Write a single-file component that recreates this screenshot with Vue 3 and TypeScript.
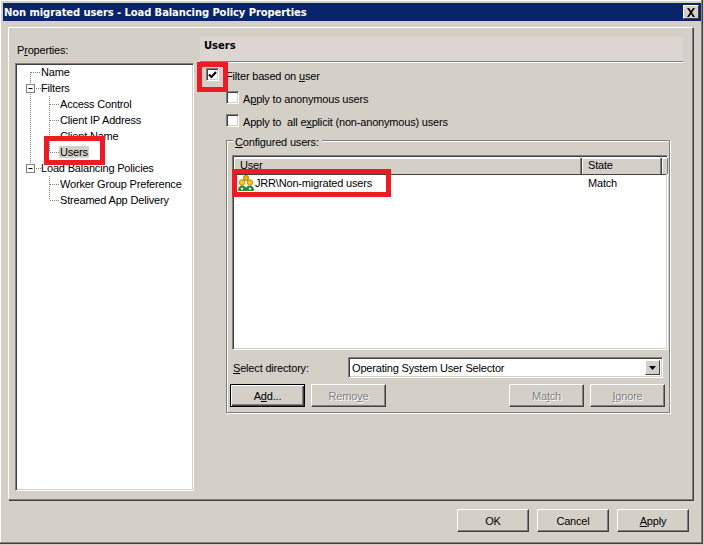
<script setup lang="ts">
const rows = [
  { label: 'Name', indent: 'l1' },
  { label: 'Filters', indent: 'l1' },
  { label: 'Access Control', indent: 'l2' },
  { label: 'Client IP Address', indent: 'l2' },
  { label: 'Client Name', indent: 'l2' },
  { label: 'Users', indent: 'l2 sel' },
  { label: 'Load Balancing Policies', indent: 'l1' },
  { label: 'Worker Group Preference', indent: 'l2' },
  { label: 'Streamed App Delivery', indent: 'l2' },
]
</script>

<template>
  <div class="window">
    <div class="titlebar">
      <span class="title">Non migrated users - Load Balancing Policy Properties</span>
      <span class="close">
        <svg width="10" height="9" viewBox="0 0 10 9"><path d="M1 0h2l2 3 2-3h2L6 4.500 9 9H7L5 6 3 9H1l3-4.500z" fill="#000"/></svg>
      </span>
    </div>

    <div class="panel">
      <div class="left">
        <div class="props-label">P<u>r</u>operties:</div>
        <div class="tree sunken">
          <svg class="tree-lines" width="120" height="150" viewBox="0 0 120 150">
            <g stroke="#808080" stroke-dasharray="1 1" fill="none">
              <path d="M12.500 9V105" />
              <path d="M13 9.500H23M18 25.500H23M18 105.500H23" />
              <path d="M31.500 33V89M31.500 113V137" />
              <path d="M32 41.500H42M32 57.500H42M32 73.500H42M32 89.500H42M32 121.500H42M32 137.500H42" />
            </g>
            <g fill="#fff" stroke="#808080">
              <rect x="8.500" y="21.500" width="8" height="8" />
              <rect x="8.500" y="101.500" width="8" height="8" />
            </g>
            <path d="M10.500 25.500h4M10.500 105.500h4" stroke="#000" />
          </svg>
          <div v-for="r in rows" :key="r.label" class="row" :class="r.indent"><span>{{ r.label }}</span></div>
        </div>
      </div>

      <div class="right">
        <div class="band"><b>Users</b></div>
        <div class="opts">
          <label class="check first"><span class="box sunken"><svg width="9" height="8" viewBox="0 0 9 8"><path d="M1 3.500l2.500 2.500L8 1" fill="none" stroke="#000" stroke-width="2"/></svg></span><span class="lbl">Filter based on <u>u</u>ser</span></label>
          <label class="check sub"><span class="box sunken"></span><span class="lbl">A<u>p</u>ply to anonymous users</span></label>
          <label class="check sub"><span class="box sunken"></span><span class="lbl">Apply to &nbsp;all e<u>x</u>plicit (non-anonymous) users</span></label>
        </div>

        <div class="group">
          <div class="legend"><u>C</u>onfigured users:</div>
          <div class="list sunken">
            <div class="list-head">
              <div class="col user">User</div>
              <div class="col state">State</div>
              <div class="col tail"></div>
            </div>
            <div class="list-row">
              <div class="cell user-cell">
                <svg class="group-icon" width="16" height="16" viewBox="0 0 16 16">
                  <path d="M0.500 15.500c0-3 1-4.500 3.500-4.500 2 0 3 1 4 2 1-1 2-2 4-2 2.500 0 3.500 1.500 3.500 4.500z" fill="#1f8f2a" stroke="#0b6b12" stroke-width=".7"/>
                  <path d="M4 12.500v2.500M2.800 13.800h2.400M12 12.500v2.500M10.800 13.800h2.400" stroke="#fff" stroke-width="1"/>
                  <circle cx="8" cy="3" r="2.700" fill="#e5ae08" stroke="#a37400" stroke-width=".7"/>
                  <circle cx="4" cy="7.500" r="2.800" fill="#f2c81a" stroke="#a37400" stroke-width=".7"/>
                  <circle cx="12" cy="7.500" r="2.800" fill="#f2c81a" stroke="#a37400" stroke-width=".7"/>
                </svg>
                <span>JRR\Non-migrated users</span>
              </div>
              <div class="cell state-cell">Match</div>
            </div>
          </div>

          <div class="dir-row">
            <div class="dir-label"><u>S</u>elect directory:</div>
            <div class="select sunken">
              <span class="select-text">Operating System User Selector</span>
              <span class="arrow"><svg width="7" height="4" viewBox="0 0 7 4"><path d="M0 0h7L3.500 4z" fill="#000"/></svg></span>
            </div>
          </div>

          <div class="btn-row">
            <button class="btn default">A<u>d</u>d...</button>
            <button class="btn dis">Remo<u>v</u>e</button>
            <span class="spacer"></span>
            <button class="btn dis">Ma<u>t</u>ch</button>
            <button class="btn dis"><u>I</u>gnore</button>
          </div>
        </div>
      </div>
    </div>

    <div class="footer">
      <button class="btn foot">OK</button>
      <button class="btn foot">Cancel</button>
      <button class="btn foot"><u>A</u>pply</button>
    </div>

    <div class="mark m1"></div>
    <div class="mark m2"></div>
    <div class="mark m3"></div>
  </div>
</template>

<style>
html, body { margin: 0; padding: 0; background: #d4d0c8; }
</style>

<style scoped>
.window {
  position: relative;
  box-sizing: border-box;
  width: 704px;
  height: 545px;
  padding: 3px 3px 0;
  overflow: hidden;
  background: #d4d0c8;
  box-shadow: inset -1px -1px 0 #d4d0c8, inset -2px -2px 0 #404040, inset -3px -3px 0 #808080, inset 1px 1px 0 #fff;
  font-family: "Liberation Sans", Arial, sans-serif;
  font-size: 11px;
  letter-spacing: -0.18px;
  color: #000;
}
.titlebar {
  height: 18px;
  background: #0a246a;
  display: flex;
  align-items: center;
  justify-content: space-between;
  padding: 0 2px 0 1px;
  color: #fff;
}
.title { font-family: "DejaVu Sans", sans-serif; font-weight: 700; font-size: 10px; letter-spacing: -0.1px; }
.close {
  width: 16px;
  height: 14px;
  box-sizing: border-box;
  background: #d4d0c8;
  border: 1px solid;
  border-color: #fff #404040 #404040 #fff;
  display: flex;
  align-items: center;
  justify-content: center;
}
.panel {
  box-sizing: border-box;
  margin: 6px 8px 0 5px;
  height: 473px;
  border: 1px solid;
  border-color: #fff #808080 #808080 #fff;
  box-shadow: 1px 1px 0 #404040;
  display: flex;
  padding: 9px 9px 8px 6px;
  gap: 6px;
}
.sunken {
  border: 1px solid;
  border-color: #808080 #fff #fff #808080;
  box-shadow: inset 1px 1px 0 #404040, inset -1px -1px 0 #d4d0c8;
}
.left { width: 179px; display: flex; flex-direction: column; flex: none; }
.props-label { height: 25px; box-sizing: border-box; padding: 6px 0 0 2px; line-height: 14px; margin-bottom: 1px; }
.tree {
  position: relative;
  flex: 1;
  background: #fff;
  padding: 1px 0 0;
  box-sizing: border-box;
}
.tree-lines { position: absolute; left: 2px; top: -1px; }
.row { height: 16px; line-height: 15px; position: relative; white-space: nowrap; }
.row.l1 { padding-left: 25px; }
.row.l2 { padding-left: 44px; }
.row.sel span { background: #d4d0c8; padding: 0 1px; margin-left: -1px; }
.right { flex: 1; min-width: 0; display: flex; flex-direction: column; }
.band {
  height: 25px;
  flex: none;
  box-sizing: border-box;
  background-color: #dcd5d0;
  background-image: repeating-conic-gradient(#dbd3cf 0 25%, #ded7d3 0 50%);
  background-size: 2px 2px;
  padding: 1px 0 0 4px;
  line-height: 14px;
  border-bottom: 1px solid #808080;
  box-shadow: 0 1px 0 #fff;
}
.band b { font-family: "DejaVu Sans", sans-serif; font-size: 10px; letter-spacing: 0; }
.opts { padding: 6px 0 0 6px; display: flex; flex-direction: column; gap: 10px; }
.check { display: flex; align-items: center; gap: 4px; height: 13px; white-space: nowrap; }
.check.first { gap: 7px; }
.check.sub { margin-left: 20px; gap: 4px; }
.lbl { margin-top: 2px; }
.box {
  width: 13px;
  height: 13px;
  box-sizing: border-box;
  background: #fff;
  display: flex;
  align-items: center;
  justify-content: center;
  flex: none;
}
.group {
  position: relative;
  box-sizing: border-box;
  margin: 13px 13px 0 26px;
  height: 273px;
  border: 1px solid #808080;
  box-shadow: inset 1px 1px 0 #fff, 1px 1px 0 #fff;
  padding: 14px 1px 0 3px;
}
.legend {
  position: absolute;
  top: -6px;
  left: 6px;
  padding: 0 3px 0 2px;
  background: #d4d0c8;
  line-height: 14px;
}
.list {
  height: 195px;
  margin-left: 2px;
  box-sizing: border-box;
  background: #fff;
  padding: 2px 1px;
}
.list-head { display: flex; height: 16px; background: #d4d0c8; border-bottom: 1px solid #404040; }
.col { box-sizing: border-box; flex: none; padding-left: 6px; line-height: 15px; border-right: 1px solid #404040; box-shadow: inset -1px 0 0 #808080, inset 1px 1px 0 #fff; }
.col.user { width: 348px; }
.col.state { width: 80px; }
.col.tail { flex: 1; border-right: 0; }
.list-row { display: flex; height: 18px; align-items: center; margin-top: -1px; }
.user-cell { width: 348px; display: flex; align-items: center; gap: 1px; padding-left: 4px; box-sizing: border-box; flex: none; }
.group-icon { flex: none; }
.state-cell { padding-left: 6px; }
.dir-row { display: flex; align-items: center; margin-top: 7px; }
.dir-label { width: 118px; padding: 1px 0 0 3px; box-sizing: border-box; flex: none; }
.select {
  width: 315px;
  height: 21px;
  box-sizing: border-box;
  background: #fff;
  display: flex;
  align-items: center;
  justify-content: space-between;
  padding: 2px 2px 2px 3px;
}
.select-text { line-height: 15px; padding-top: 2px; }
.arrow {
  width: 15px;
  height: 15px;
  box-sizing: border-box;
  background: #d4d0c8;
  border: 1px solid;
  border-color: #fff #404040 #404040 #fff;
  display: flex;
  align-items: center;
  justify-content: center;
}
.btn-row { display: flex; gap: 6px; margin: 6px 3px 0 0; }
.spacer { flex: 1; }
.btn {
  font: inherit;
  letter-spacing: inherit;
  width: 75px;
  height: 23px;
  padding: 0;
  background: #d4d0c8;
  color: #000;
  border: 1px solid;
  border-color: #fff #404040 #404040 #fff;
  box-shadow: inset -1px -1px 0 #808080;
}
.btn.default { border-color: #000; box-shadow: inset 1px 1px 0 #fff, inset -1px -1px 0 #404040, inset -2px -2px 0 #808080; }
.btn.dis { color: #808080; text-shadow: 1px 1px 0 #fff; }
.footer { display: flex; justify-content: flex-end; gap: 8px; padding: 9px 12px 0 0; }
.btn.foot { width: 72px; height: 23px; }
.mark { position: absolute; border: 5px solid #ed1c24; box-sizing: border-box; pointer-events: none; }
.m1 { left: 44px; top: 136px; width: 61px; height: 29px; }
.m2 { left: 197px; top: 62px; width: 31px; height: 30px; }
.m3 { left: 232px; top: 169px; width: 159px; height: 28px; }
</style>
